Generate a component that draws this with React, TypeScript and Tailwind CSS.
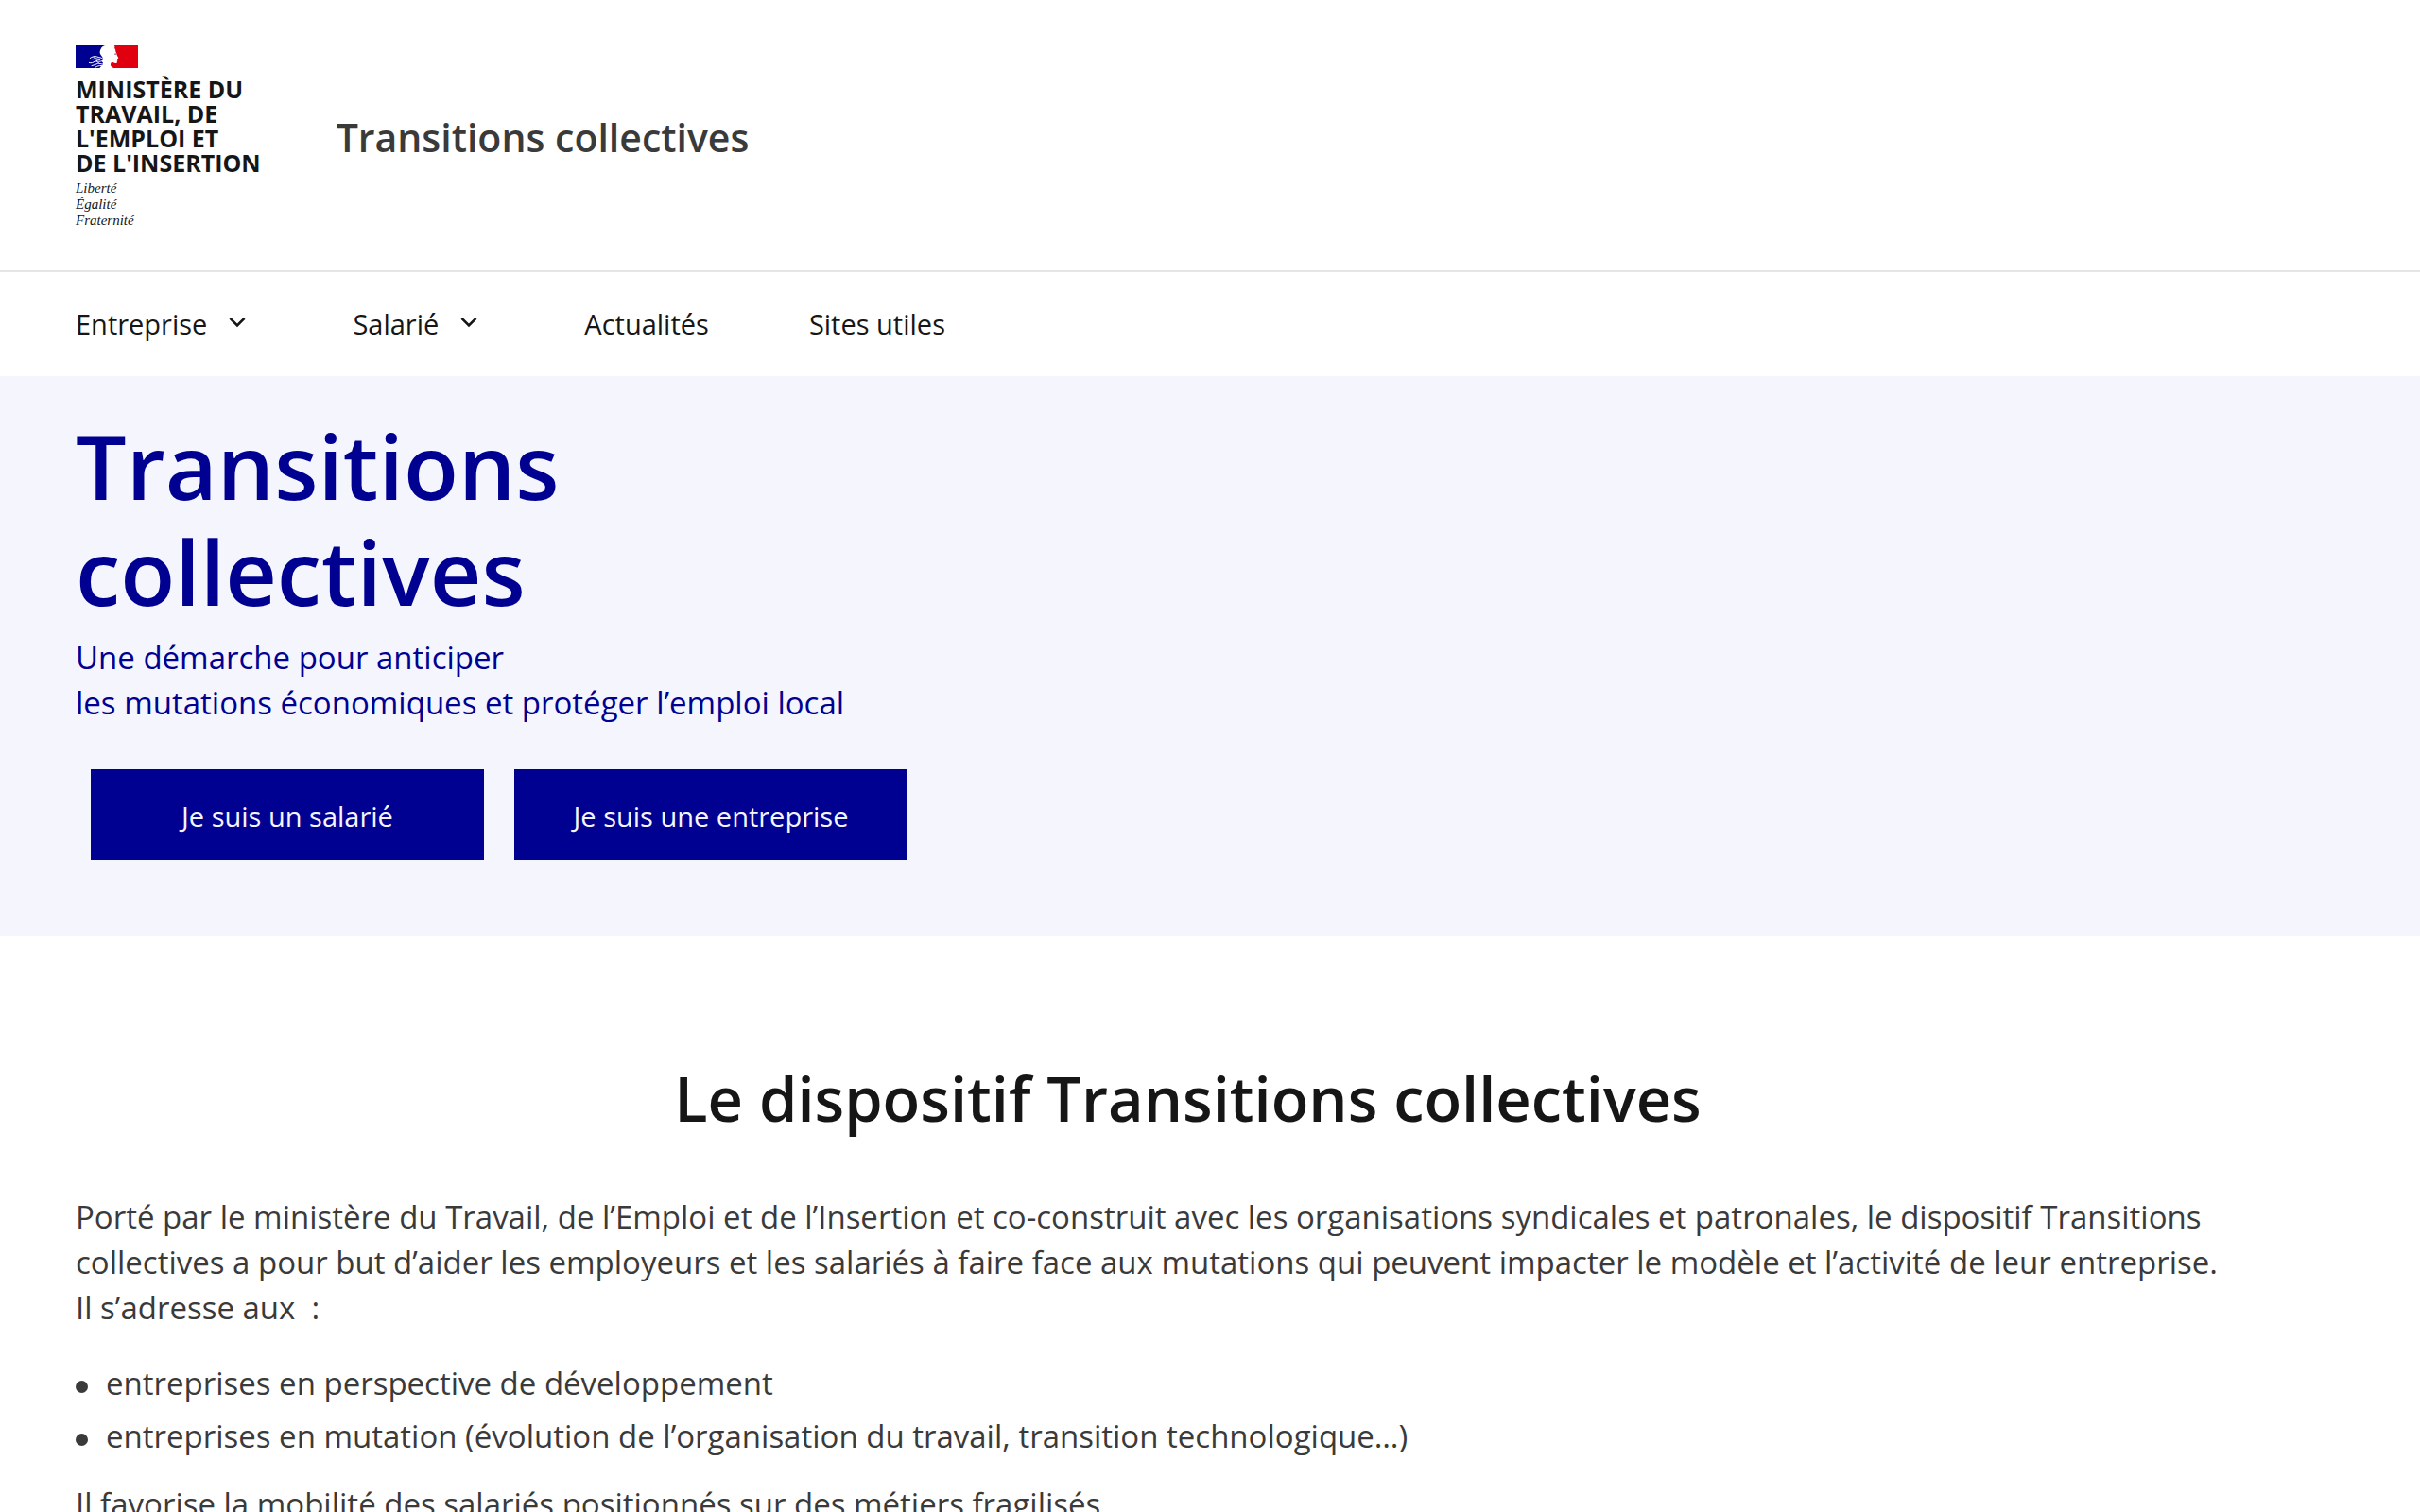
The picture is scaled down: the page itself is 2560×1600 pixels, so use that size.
const navItems = [
  { label: 'Entreprise', hasMenu: true },
  { label: 'Salarié', hasMenu: true },
  { label: 'Actualités', hasMenu: false },
  { label: 'Sites utiles', hasMenu: false },
];

const audiences = [
  'entreprises en perspective de développement',
  'entreprises en mutation (évolution de l’organisation du travail, transition technologique…)',
];

function Flag() {
  return (
    <svg viewBox="0 0 198 72" className="h-6 w-[66px]" aria-hidden="true">
      <path
        fill="#000091"
        d="M0 0H93C86 3 82 6 80 11C77 16 76 22 78 27C80 32 84 34 86 39C88 44 84 48 83 51C85 54 88 56 87 60C85 64 80 67 76 72H0Z"
      />
      <path
        fill="#e1000f"
        d="M198 0H122C125 3 125 6 123 9C127 12 127 17 127 20C130 23 130 27 131 30C132 34 135 37 136 40C135 42 132 42 132 44L134 48L131 50C133 54 131 57 127 57C122 56 118 54 114 54C111 57 110 62 112 66L120 72H198Z"
      />
      <path
        fill="none"
        stroke="#fff"
        strokeWidth="3"
        d="M45 41C52 36 60 33 68 36C74 38 80 38 86 42M56 38C62 40 68 44 78 43M48 47C56 44 64 47 70 51C76 53 82 50 88 49M42 55C50 58 56 55 61 51C66 50 70 54 74 56M50 65C58 64 64 60 70 58C76 57 80 60 88 60M62 70C68 67 74 63 84 65"
      />
      <path fill="#7a7a85" d="M123 26L130 25L129 29L125 30Z" />
    </svg>
  );
}

function Chevron() {
  return (
    <svg viewBox="0 0 24 24" className="mb-1 size-8" fill="currentColor" aria-hidden="true">
      <path d="M12 13.172l4.95-4.95 1.414 1.414L12 16 5.636 9.636 7.05 8.222z" />
    </svg>
  );
}

export default function App() {
  return (
    <div className="min-h-screen overflow-hidden bg-white font-['Open_Sans',sans-serif] text-[33px] leading-[48px] text-[#3a3a3a]">
      <header>
        <div className="flex items-center gap-20 border-b-2 border-[#e5e5e5] px-20 pt-12 pb-11">
          <div className="text-[#161616]">
            <Flag />
            <p className="mt-[9px] text-[25px] leading-[26px] font-bold">
              MINISTÈRE DU
              <br />
              TRAVAIL, DE
              <br />
              L'EMPLOI ET
              <br />
              DE L'INSERTION
            </p>
            <p className="mt-[6px] font-['Liberation_Serif',serif] text-[15px] leading-[17px] italic">
              Liberté
              <br />
              Égalité
              <br />
              Fraternité
            </p>
          </div>
          <a href="#" className="text-[41px] font-semibold">
            Transitions collectives
          </a>
        </div>
        <nav className="flex h-[110px] items-center gap-[106px] px-20 text-[29px] text-[#161616]">
          {navItems.map(({ label, hasMenu }) =>
            hasMenu ? (
              <button key={label} type="button" className="flex items-center gap-4">
                {label}
                <Chevron />
              </button>
            ) : (
              <a key={label} href="#">
                {label}
              </a>
            ),
          )}
        </nav>
      </header>

      <main>
        <section className="bg-[#f5f5fe] px-20 pt-[38px] pb-20 text-[#000091]">
          <h1 className="text-[95px] leading-[112px] font-semibold">
            Transitions
            <br />
            collectives
          </h1>
          <p className="mt-3">
            Une démarche pour anticiper
            <br />
            les mutations économiques et protéger l’emploi local
          </p>
          <div className="mt-[46px] flex gap-8 px-4 text-[29px] text-[#f5f5fe]">
            <a href="#" className="flex h-24 w-[416px] items-center justify-center bg-[#000091] pt-1">
              Je suis un salarié
            </a>
            <a href="#" className="flex h-24 w-[416px] items-center justify-center bg-[#000091] pt-1">
              Je suis une entreprise
            </a>
          </div>
        </section>

        <section className="pt-[132px] pr-[127px] pl-20">
          <h2 className="text-center text-[65px] leading-[80px] font-semibold text-[#161616]">
            Le dispositif Transitions collectives
          </h2>
          <p className="mt-[62px]">
            Porté par le ministère du Travail, de l’Emploi et de l’Insertion et co-construit avec les
            organisations syndicales et patronales, le dispositif Transitions collectives a pour but
            d’aider les employeurs et les salariés à faire face aux mutations qui peuvent impacter le
            modèle et l’activité de leur entreprise.
            <br />
            Il s’adresse aux &nbsp;:
          </p>
          <ul className="mt-8 flex flex-col gap-2">
            {audiences.map((audience) => (
              <li key={audience} className="flex items-center gap-[19px]">
                <span className="mt-[7px] size-[13px] rounded-full bg-[#3a3a3a]" />
                {audience}
              </li>
            ))}
          </ul>
          <p className="mt-6">Il favorise la mobilité des salariés positionnés sur des métiers fragilisés</p>
        </section>
      </main>
    </div>
  );
}
